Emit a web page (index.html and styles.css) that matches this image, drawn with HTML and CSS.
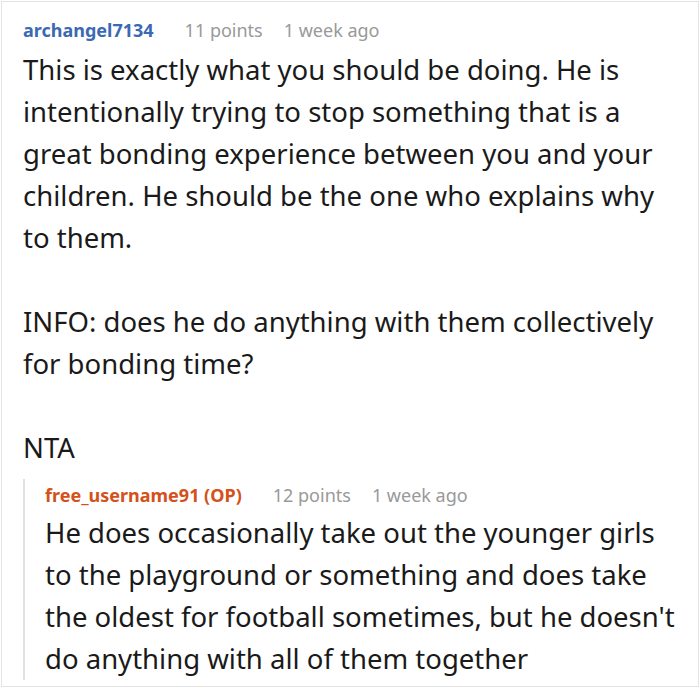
FILE: index.html
```html
<!DOCTYPE html>
<html>
<head>
<meta charset="utf-8">
<link rel="stylesheet" href="styles.css">
</head>
<body>
<div class="frame">
  <div class="comment">
    <div class="meta">
      <span class="author">archangel7134</span>
      <span class="info">11 points</span>
      <span class="info">1 week ago</span>
    </div>
    <div class="body">
      <p>This is exactly what you should be doing. He is intentionally trying to stop something that is a great bonding experience between you and your children. He should be the one who explains why to them.</p>
      <p>INFO: does he do anything with them collectively for bonding time?</p>
      <p>NTA</p>
    </div>
    <div class="reply">
      <div class="meta">
        <span class="author op">free_username91 (OP)</span>
        <span class="info">12 points</span>
        <span class="info">1 week ago</span>
      </div>
      <div class="body">
        <p>He does occasionally take out the younger girls to the playground or something and does take the oldest for football sometimes, but he doesn't do anything with all of them together</p>
      </div>
    </div>
  </div>
</div>
</body>
</html>
```
FILE: styles.css
```css
html, body {
  margin: 0;
  padding: 0;
  background: #fff;
}
body {
  font-family: "Noto Sans", "DejaVu Sans", sans-serif;
  color: #1a1a1a;
}
.frame {
  margin: 1px;
  height: 684px;
  border: 1px solid #e4e4e4;
  overflow: hidden;
}
.comment {
  padding: 12px 16px 0 21px;
}
.meta {
  display: flex;
  gap: 21px;
  font-size: 18px;
  line-height: 32px;
}
.author {
  font-weight: 700;
  color: #3b69b3;
  margin-right: 10px;
}
.author.op {
  color: #d4511a;
}
.info {
  color: #999;
}
.body {
  font-size: 27.5px;
  line-height: 42px;
  padding-top: 3px;
}
.body p {
  margin: 0 0 42px 0;
}
.reply {
  margin-top: -32px;
  border-left: 2px solid #e2e2e2;
  padding-left: 20px;
  margin-bottom: 0;
}
.reply .body {
  padding-top: 1px;
  margin-bottom: -12px;
}
.reply .body p {
  margin: 0;
}
```
